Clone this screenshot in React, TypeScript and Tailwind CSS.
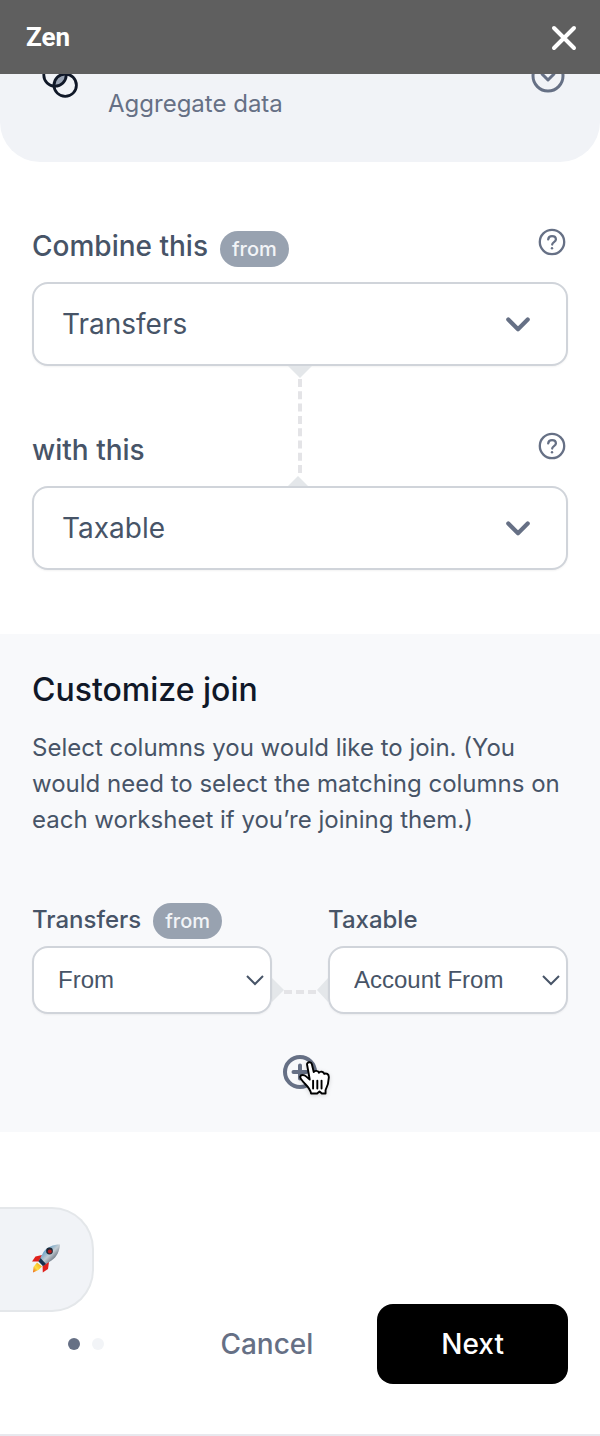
import { useState } from "react";
import type { ReactNode } from "react";

const sheets = ["Transfers", "Taxable"];
const columns = ["From", "Account From"];

const App = () => {
  const [source, setSource] = useState("Transfers");
  const [target, setTarget] = useState("Taxable");
  const [sourceColumn, setSourceColumn] = useState("From");
  const [targetColumn, setTargetColumn] = useState("Account From");

  return (
    <div className="bg-white font-[family-name:Inter,sans-serif] text-[#475467]">
      <header className="flex h-[74px] items-center justify-between bg-[#5f5f5f] pl-[26px] pr-[22px]">
        <h1 className="font-[family-name:Roboto,sans-serif] text-[26px] leading-8 font-bold text-white">
          Zen
        </h1>
        <button type="button" aria-label="Close">
          <CloseIcon />
        </button>
      </header>

      <main>
        <div className="flex h-[88px] items-end gap-[30px] overflow-hidden rounded-b-[40px] bg-[#f1f3f7] pr-[34px] pb-10 pl-[42px]">
          <JoinIcon />
          <p className="flex-1 text-2xl leading-9 text-[#667085]">
            Aggregate data
          </p>
          <button type="button" aria-label="Change action" className="mb-7">
            <CircleChevronIcon />
          </button>
        </div>

        <section className="px-8 pt-[66px] pb-16">
          <SheetField
            id="source"
            label="Combine this"
            badge
            value={source}
            onChange={setSource}
          />
          <div className="relative pt-[66px]">
            <VerticalLink />
            <SheetField
              id="target"
              label="with this"
              value={target}
              onChange={setTarget}
            />
          </div>
        </section>

        <section className="bg-[#f8f9fb] px-8 pt-9 pb-[42px]">
          <h2 className="text-[32px] leading-10 font-medium text-[#101828]">
            Customize join
          </h2>
          <p className="mt-5 text-2xl leading-9">
            Select columns you would like to join. (You would need to select the
            matching columns on each worksheet if you’re joining them.)
          </p>

          <div className="mt-16 grid grid-cols-[1fr_56px_1fr] items-end">
            <ColumnField
              id="source-column"
              label={source}
              badge
              value={sourceColumn}
              onChange={setSourceColumn}
            />
            <HorizontalLink />
            <ColumnField
              id="target-column"
              label={target}
              value={targetColumn}
              onChange={setTargetColumn}
            />
          </div>

          <div className="mt-10 flex justify-center">
            <button type="button" aria-label="Add column" className="relative">
              <PlusIcon />
              <HandCursor />
            </button>
          </div>
        </section>
      </main>

      <footer className="border-b-2 border-[#e8e8ee] pt-[75px] pb-[50px]">
        <button
          type="button"
          aria-label="Quick start"
          className="flex h-[105px] w-[94px] items-center justify-center rounded-r-[42px] border-2 border-l-0 border-[#e4e7ea] bg-[#f1f3f7]"
        >
          <RocketIcon />
        </button>
        <div className="-mt-2 flex items-center gap-16 pr-8 pl-[68px] text-[28px] leading-9 font-medium">
          <div className="mr-auto flex gap-3">
            <span className="size-3 rounded-full bg-[#667085]" />
            <span className="size-3 rounded-full bg-[#f2f4f7]" />
          </div>
          <button type="button" className="text-[#667085]">
            Cancel
          </button>
          <button
            type="button"
            className="h-20 rounded-2xl bg-black px-16 text-white"
          >
            Next
          </button>
        </div>
      </footer>
    </div>
  );
};

export default App;

interface FieldProps {
  id: string;
  label: string;
  badge?: boolean;
  value: string;
  onChange(value: string): void;
}

const Badge = ({ children }: { children: ReactNode }) => (
  <span className="rounded-full bg-[#98a2b0] px-3 text-xl leading-9 font-medium text-[#f2f4f7]">
    {children}
  </span>
);

const SheetField = ({ id, label, badge, value, onChange }: FieldProps) => (
  <div>
    <div className="flex h-[54px] items-start justify-between">
      <div className="flex items-baseline gap-3">
        <label htmlFor={id} className="text-[28px] leading-9 font-medium">
          {label}
        </label>
        {badge && <Badge>from</Badge>}
      </div>
      <button type="button" aria-label={`Help: ${label}`} className="mr-0.5">
        <HelpIcon />
      </button>
    </div>
    <div className="relative">
      <select
        id={id}
        value={value}
        onChange={(e) => onChange(e.target.value)}
        className="block h-[84px] w-full appearance-none rounded-2xl border-2 border-[#d0d4da] bg-white pr-20 pl-7 text-[28px] shadow-xs"
      >
        {sheets.map((sheet) => (
          <option key={sheet}>{sheet}</option>
        ))}
      </select>
      <svg
        className="pointer-events-none absolute inset-y-0 right-9 my-auto"
        width="28"
        height="18"
        fill="none"
        stroke="#667085"
        strokeWidth="4.2"
        strokeLinecap="round"
        strokeLinejoin="round"
      >
        <path d="M4.3 4.6 14 14.2 23.7 4.6" />
      </svg>
    </div>
  </div>
);

const ColumnField = ({ id, label, badge, value, onChange }: FieldProps) => (
  <div>
    <div className="flex h-11 items-baseline gap-3">
      <label htmlFor={id} className="text-2xl leading-9 font-medium">
        {label}
      </label>
      {badge && <Badge>from</Badge>}
    </div>
    <div className="relative">
      <select
        id={id}
        value={value}
        onChange={(e) => onChange(e.target.value)}
        className="block h-[68px] w-full appearance-none rounded-2xl border-2 border-[#d0d4da] bg-white pr-9 pl-6 font-[family-name:Liberation_Sans,sans-serif] text-2xl shadow-xs"
      >
        {columns.map((column) => (
          <option key={column}>{column}</option>
        ))}
      </select>
      <svg
        className="pointer-events-none absolute inset-y-0 right-2 my-auto"
        width="18"
        height="12"
        fill="none"
        stroke="#475467"
        strokeWidth="2"
      >
        <path d="M1 2 9 10 17 2" />
      </svg>
    </div>
  </div>
);

/* dashed link between the two sheet selects */
const VerticalLink = () => (
  <svg
    className="pointer-events-none absolute inset-x-0 top-0 mx-auto"
    width="24"
    height="120"
    fill="#e4e7ea"
  >
    <path d="M0 0H24L12 12Z" />
    <path d="M12 13V110" stroke="#e4e4e7" strokeWidth="4" strokeDasharray="8 4.3" />
    <path d="M0 120H20L10 110Z" />
  </svg>
);

const HorizontalLink = () => (
  <svg width="100%" height="68" viewBox="0 0 56 68" fill="#e4e7ea">
    <path d="M0 32V56L12 44Z" />
    <path d="M12 46H44" stroke="#e4e4e7" strokeWidth="4" strokeDasharray="8 4" />
    <path d="M56 32V56L45 44Z" />
  </svg>
);

const CloseIcon = () => (
  <svg
    width="28"
    height="28"
    fill="none"
    stroke="#fff"
    strokeWidth="4"
    strokeLinecap="round"
  >
    <path d="M4 5 24 25M24 5 4 25" />
  </svg>
);

const JoinIcon = () => (
  <svg
    className="mb-6 shrink-0"
    width="36"
    height="36"
    fill="none"
    stroke="#101828"
    strokeWidth="2.8"
  >
    <path
      d="M24.2 12.2A11.2 11.2 0 0 1 12.2 24.2 11.2 11.2 0 0 1 24.2 12.2Z"
      fill="#98a2b3"
      stroke="none"
    />
    <circle cx="13" cy="13" r="11.2" />
    <circle cx="23.2" cy="23.2" r="11.2" />
  </svg>
);

const CircleChevronIcon = () => (
  <svg
    width="36"
    height="36"
    fill="none"
    stroke="#667085"
    strokeWidth="3"
    strokeLinejoin="round"
  >
    <circle cx="18" cy="18" r="15" />
    <path d="M11.5 15.5 18 22 24.5 15.5" />
  </svg>
);

const HelpIcon = () => (
  <svg
    width="28"
    height="28"
    fill="none"
    stroke="#667085"
    strokeWidth="2.3"
    strokeLinecap="round"
    strokeLinejoin="round"
  >
    <circle cx="14" cy="14" r="12.2" />
    <path d="M10.2 11.3C10.5 9.300 12 8.200 14 8.200c2.200 0 3.900 1.300 3.900 3.300 0 2.500-3.700 2.700-3.700 5" />
    <circle cx="14" cy="20.2" r="1.2" fill="#667085" stroke="none" />
  </svg>
);

const PlusIcon = () => (
  <svg width="36" height="36" fill="none" stroke="#667085" strokeWidth="4">
    <circle cx="18" cy="18" r="15" />
    <path d="M18 11.5V24.5M11.5 18H24.5" strokeLinecap="round" />
  </svg>
);

const HandCursor = () => (
  <svg
    className="pointer-events-none absolute top-1.5 left-4 drop-shadow-sm"
    width="34"
    height="38"
    viewBox="0 0 32 36"
    stroke="#000"
    strokeWidth="1.8"
    strokeLinejoin="round"
    strokeLinecap="round"
  >
    <path
      fill="#fff"
      d="M8.500 4.500C8 2 12.200 1 13 3.800L14.800 11.500C15.500 9.800 19.200 9.900 19.700 12.200 20.800 10.300 24.300 10.800 24.700 13.200 26.500 12 29.300 13.200 29.100 16.500 29 21.500 27.500 25.500 26 28.500V31.800H22.500L20.300 29.800 18 31.800H12.300C11.800 28.500 9.500 25.500 6.500 22.500 4.500 20 1.500 18 2 15.800 2.600 13.500 6 14 7.500 15.500L11 18.500Z"
    />
    <path fill="none" d="M14.200 19.500V27M18.200 19.500V27M22.200 19.500V27" />
  </svg>
);

const RocketIcon = () => (
  <svg className="mb-1" width="30" height="30" viewBox="0 0 30 30">
    <defs>
      <linearGradient id="hull" x1="0" y1="0" x2="1" y2="1">
        <stop offset="0.2" stopColor="#4a94c4" />
        <stop offset="0.5" stopColor="#c3ccd3" />
        <stop offset="0.8" stopColor="#4b5563" />
      </linearGradient>
      <linearGradient id="flame" x1="1" y1="0" x2="0" y2="1">
        <stop offset="0" stopColor="#f59e0b" />
        <stop offset="0.6" stopColor="#fde047" />
        <stop offset="1" stopColor="#ea580c" />
      </linearGradient>
    </defs>
    <path fill="#e0201b" d="M11 12 4.500 13.500 1 18.500 9 18.500Z" />
    <path fill="#e0201b" d="M18 19 17 26 11.800 29.500 11.500 21Z" />
    <path fill="url(#flame)" d="M6 19.500 2.500 24 2 29.500 7.500 27 11 23.500Z" />
    <path
      fill="url(#hull)"
      d="M29 1.500C22 1.500 16 4 12.500 9L7.500 18.500 12 23 20.500 17.500C26 14 28.500 8 29 1.500Z"
    />
    <path fill="#17304d" d="M7.500 18.500 9.500 15 15 21 12 23Z" />
    <circle cx="18.500" cy="8" r="3.400" fill="#1f2937" />
    <circle cx="18.800" cy="8.500" r="2" fill="#b91c1c" />
  </svg>
);
